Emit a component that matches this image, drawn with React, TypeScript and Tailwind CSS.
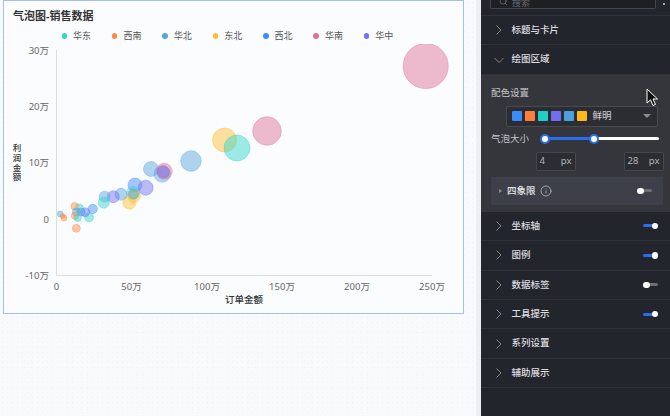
import { Info, Search } from "lucide-react";

const COLORS = {
  teal: "#2fd6cc",
  orange: "#ff8a45",
  sky: "#55a5e0",
  yellow: "#ffbd2e",
  blue: "#3c8cff",
  pink: "#dd7196",
  purple: "#7270f0",
};

const LEGEND = [
  { name: "华东", color: COLORS.teal },
  { name: "西南", color: COLORS.orange },
  { name: "华北", color: COLORS.sky },
  { name: "东北", color: COLORS.yellow },
  { name: "西北", color: COLORS.blue },
  { name: "华南", color: COLORS.pink },
  { name: "华中", color: COLORS.purple },
];

// cx, cy, r in page pixels, read off the picture
const BUBBLES: [number, number, number, string][] = [
  [425.7, 66, 22.6, COLORS.pink],
  [267, 131, 14.3, COLORS.pink],
  [224.5, 140, 12, COLORS.yellow],
  [237, 148, 13, COLORS.teal],
  [191, 161, 10.3, COLORS.sky],
  [151, 169, 7.5, COLORS.sky],
  [162.3, 174, 8.3, COLORS.sky],
  [164.3, 171.3, 8, COLORS.pink],
  [163.5, 172, 6, COLORS.purple],
  [135, 185, 7, COLORS.blue],
  [145.7, 187.7, 7.5, COLORS.purple],
  [133, 193, 6.5, COLORS.teal],
  [134, 196, 6.5, COLORS.yellow],
  [129.3, 202.7, 6.5, COLORS.yellow],
  [133.5, 194, 5, COLORS.sky],
  [121, 194.3, 6, COLORS.sky],
  [113.3, 196.7, 6, COLORS.purple],
  [104.7, 196.7, 5.5, COLORS.sky],
  [103.7, 202.7, 5.5, COLORS.teal],
  [92.7, 209, 4.7, COLORS.blue],
  [89, 217.3, 4.5, COLORS.teal],
  [85, 212.3, 4.5, COLORS.purple],
  [81, 212, 4, COLORS.blue],
  [79.3, 208.3, 4.3, COLORS.teal],
  [74.7, 206.3, 3.7, COLORS.orange],
  [76.3, 212, 4, COLORS.sky],
  [75, 215.7, 3.7, COLORS.orange],
  [77.7, 217.7, 3.7, COLORS.teal],
  [76.3, 228.3, 4, COLORS.orange],
  [60.3, 214, 3, COLORS.sky],
  [62.7, 216, 2.5, COLORS.orange],
  [64, 218, 3, COLORS.orange],
];

const Y_TICKS = [
  { label: "30万", y: 50 },
  { label: "20万", y: 106 },
  { label: "10万", y: 162.5 },
  { label: "0", y: 219 },
  { label: "-10万", y: 275 },
];

const X_TICKS = [
  { label: "0", x: 56.5 },
  { label: "50万", x: 131.5 },
  { label: "100万", x: 207 },
  { label: "150万", x: 282 },
  { label: "200万", x: 357 },
  { label: "250万", x: 432 },
];

function Chart() {
  return (
    <svg viewBox="4 44 458 269" className="h-[269px] w-[458px]">
      <path d="M56.5 50V275.5H432" fill="none" stroke="#dcdde0" />
      {Y_TICKS.map((t) => (
        <text key={t.label} x={49} y={t.y + 3.5} textAnchor="end" fontSize={9.5} fill="#666">
          {t.label}
        </text>
      ))}
      {X_TICKS.map((t) => (
        <text key={t.label} x={t.x} y={290} textAnchor="middle" fontSize={9.5} fill="#666">
          {t.label}
        </text>
      ))}
      <text x={17} y={151} textAnchor="middle" fontSize={8.5} fontWeight={500} fill="#333">
        <tspan x={17}>利</tspan>
        <tspan x={17} dy={9.8}>润</tspan>
        <tspan x={17} dy={9.8}>金</tspan>
        <tspan x={17} dy={9.8}>额</tspan>
      </text>
      <text x={244} y={303} textAnchor="middle" fontSize={9.5} fontWeight={500} fill="#333">
        订单金额
      </text>
      {BUBBLES.map(([cx, cy, r, c], i) => (
        <circle key={i} cx={cx} cy={cy} r={r} fill={c} fillOpacity={0.47} stroke={c} strokeOpacity={0.55} strokeWidth={0.7} />
      ))}
    </svg>
  );
}

function Chevron({ open }: { open?: boolean }) {
  return (
    <svg width="12" height="12" viewBox="0 0 12 12" fill="none" stroke="#81848c" strokeWidth="1">
      <path d={open ? "M1.5 4 6 8.5 10.5 4" : "M3.5 1.5 8 6 3.5 10.5"} />
    </svg>
  );
}

function Toggle({ on }: { on: boolean }) {
  return (
    <div className={`flex h-[7px] w-[15px] items-center ${on ? "justify-end" : "justify-start"} relative`}>
      <div className={`absolute inset-x-0 h-[3px] rounded-full ${on ? "bg-[#2a6df0]" : "bg-[#6c6e75]"}`} />
      <div className="relative size-[6.5px] rounded-full bg-white" />
    </div>
  );
}

function Row({ title, toggle, open }: { title: string; toggle?: boolean; open?: boolean }) {
  return (
    <div className="flex h-[29.4px] shrink-0 items-center justify-between border-b border-[#30323a] pl-3 pr-3">
      <div className="flex items-center gap-[6.5px]">
        <Chevron open={open} />
        <span className="text-[9.5px] font-medium text-[#dcdde0]">{title}</span>
      </div>
      {toggle !== undefined && <Toggle on={toggle} />}
    </div>
  );
}

function PxInput({ value }: { value: string }) {
  return (
    <div className="flex h-[19px] w-10 items-center justify-between rounded-[2px] border border-[#46474d] bg-[#2c2d32] pl-[3px] pr-[3px] text-[9.5px] text-[#b5b6ba]">
      <span>{value}</span>
      <span>px</span>
    </div>
  );
}

function Drawing() {
  return (
    <div className="flex h-[137px] shrink-0 flex-col bg-[#35363b] px-[10px] pt-[11.5px]">
      <div className="text-[9.5px] leading-[14px] text-[#c4c5c8]">配色设置</div>
      <div className="ml-[15px] mt-[5.5px] flex h-[21px] w-[152px] items-center rounded-[2px] border border-[#494a50] bg-[#2c2d32] pl-[4.5px] pr-[6px]">
        <div className="flex gap-[3px]">
          {["#3a8bff", "#ff7f3a", "#20d0c6", "#6f6ff0", "#4aa0e0", "#ffb81a"].map((c) => (
            <div key={c} className="size-[10px] rounded-[1px]" style={{ background: c }} />
          ))}
        </div>
        <span className="ml-[6px] text-[9.5px] text-[#d4d5d8]">鲜明</span>
        <div className="ml-auto size-0 border-x-[4px] border-t-[4px] border-x-transparent border-t-[#8a8b90]" />
      </div>
      <div className="mt-[2px] flex h-[20px] items-center">
        <span className="w-[50px] text-[9.5px] text-[#c4c5c8]">气泡大小</span>
        <div className="relative ml-[3.5px] h-[3px] w-[114px] rounded-full bg-white">
          <div className="absolute left-0 top-0 h-[3px] w-[49px] bg-[#2a6df0]" />
          <div className="absolute left-[-4.5px] top-[-3.5px] size-[10px] rounded-full border-2 border-[#2a6df0] bg-white" />
          <div className="absolute left-[44px] top-[-3.5px] size-[10px] rounded-full border-2 border-[#2a6df0] bg-white" />
        </div>
      </div>
      <div className="ml-[44.5px] mt-[3px] flex w-[128px] justify-between">
        <PxInput value="4" />
        <PxInput value="28" />
      </div>
      <div className="mt-[6px] flex h-[28px] w-[172px] items-center bg-[#3e4049] pl-[8px] pr-[11px]">
        <div className="size-0 border-y-[2px] border-l-[3px] border-y-transparent border-l-[#8a8b90]" />
        <span className="ml-[5px] text-[9.5px] font-medium text-[#e4e5e8]">四象限</span>
        <Info size={12} strokeWidth={1.3} className="ml-[4px] text-[#d4d5d8]" />
        <div className="ml-auto">
          <Toggle on={false} />
        </div>
      </div>
    </div>
  );
}

export default function App() {
  return (
    <div className="relative flex h-[416px] w-[670px] overflow-hidden bg-[#f9fafc] font-['Noto_Sans','Noto_Sans_CJK_SC',sans-serif]">
      <div className="flex h-full flex-1 bg-[radial-gradient(#f0f2f6_0.6px,transparent_0.7px),radial-gradient(#f1f3f7_0.6px,transparent_0.7px)] bg-[length:5px_5px,7px_7px] pl-[3px]">
        <div className="flex h-[314px] w-[461px] flex-col border border-[#a3bff2] bg-[#fbfcfe]">
          <div className="pl-[9px] pt-[7px] text-[11px] font-bold leading-[16px] text-[#333]">气泡图-销售数据</div>
          <div className="mt-[4px] flex h-[16px] items-center pl-[57.5px]">
            {LEGEND.map((l) => (
              <div key={l.name} className="flex w-[50.4px] items-center">
                <div className="size-[5.5px] rounded-full" style={{ background: l.color }} />
                <span className="ml-[6px] text-[9px] text-[#555]">{l.name}</span>
              </div>
            ))}
          </div>
          <Chart />
        </div>
      </div>

      <div className="h-full w-[5px] shrink-0 bg-[#eeeff3]" />

      <div className="flex h-full w-[189px] shrink-0 flex-col bg-[#23252c]">
        <div className="flex h-[16px] shrink-0 items-start border-b border-[#30323a] pl-[9px] pr-[5px]">
          <div className="flex h-[9px] w-[166px] items-end rounded-b-[2px] border border-t-0 border-[#43454d] bg-[#1e1f24] pl-[8px]">
            <Search size={9} strokeWidth={1.5} className="mb-[2px] text-[#8a8c93]" />
            <span className="ml-[4px] text-[9px] leading-[10px] text-[#6a6c73]">搜索</span>
          </div>
          <div className="ml-auto mt-[3px] size-[2px] rounded-full bg-[#d4d5d8]" />
        </div>
        <Row title="标题与卡片" />
        <Row title="绘图区域" open />
        <Drawing />
        <Row title="坐标轴" toggle />
        <Row title="图例" toggle />
        <Row title="数据标签" toggle={false} />
        <Row title="工具提示" toggle />
        <Row title="系列设置" />
        <Row title="辅助展示" />
      </div>

      <svg className="absolute left-[646px] top-[88px]" width="13" height="19" viewBox="0 0 13 19">
        <path d="M1 1V15L4.5 11.8 7 17.5 9.5 16.4 7 11H11.5Z" fill="#111" stroke="#fff" strokeWidth="1" />
      </svg>
    </div>
  );
}
